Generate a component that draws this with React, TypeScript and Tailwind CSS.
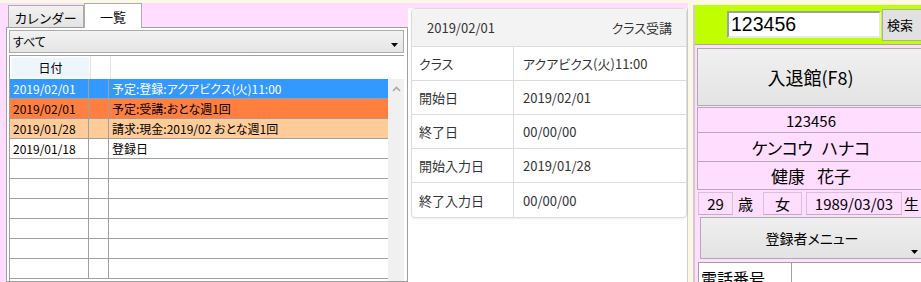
import React from "react";

const rows = [
  { d: "2019/02/01", t: "予定:登録:アクアビクス(火)11:00", bg: "bg-[#3399ff]", fg: "text-white" },
  { d: "2019/02/01", t: "予定:受講:おとな週1回", bg: "bg-[#ff7f40]", fg: "text-black" },
  { d: "2019/01/28", t: "請求:現金:2019/02 おとな週1回", bg: "bg-[#ffcc99]", fg: "text-black" },
  { d: "2019/01/18", t: "登録日", bg: "bg-white", fg: "text-black" },
  { d: "", t: "", bg: "bg-white", fg: "text-black" },
  { d: "", t: "", bg: "bg-white", fg: "text-black" },
  { d: "", t: "", bg: "bg-white", fg: "text-black" },
  { d: "", t: "", bg: "bg-white", fg: "text-black" },
  { d: "", t: "", bg: "bg-white", fg: "text-black" },
  { d: "", t: "", bg: "bg-white", fg: "text-black" },
];

const cardRows = [
  ["クラス", "アクアビクス(火)11:00"],
  ["開始日", "2019/02/01"],
  ["終了日", "00/00/00"],
  ["開始入力日", "2019/01/28"],
  ["終了入力日", "00/00/00"],
];

export default function App() {
  return (
    <div className="w-[921px] h-[282px] overflow-hidden flex bg-[#fbf8e6] font-['Noto_Sans_CJK_JP',sans-serif] [font-feature-settings:'palt'] text-black leading-none">
      {/* Left column */}
      <div className="w-[408px] h-full pt-[3px] shrink-0">
        <div className="h-full bg-[#ffddff] flex flex-col">
          {/* tabs */}
          <div className="h-[24px] flex items-end pl-[8px] shrink-0">
            <div className="w-[76px] h-[22px] border border-b-0 border-[#acacac] bg-gradient-to-b from-[#f2f2f2] to-[#e3e3e3] flex items-center justify-center text-[13px] tracking-[0.5px] pt-[1px]">
              カレンダー
            </div>
            <div className="w-[58px] h-[25px] -mb-[1px] border border-b-0 border-[#acacac] bg-white flex items-center justify-center text-[13px] relative z-10">
              一覧
            </div>
          </div>
          {/* panel */}
          <div className="flex-1 ml-[6px] border border-[#a0a0a0] bg-white pl-[2px] pr-[3px] pt-[2px] flex flex-col">
            {/* dropdown */}
            <div className="h-[23px] border border-[#acacac] bg-gradient-to-b from-[#f2f2f2] to-[#e5e5e5] flex justify-between pl-[3px] pr-[5px] shrink-0">
              <span className="text-[12px] pt-[5px]">すべて</span>
              <svg width="7" height="4" viewBox="0 0 7 4" className="self-end mb-[5px]">
                <path d="M0 0 H7 L3.5 4 Z" fill="#000" />
              </svg>
            </div>
            {/* grid */}
            <div className="mt-[2px] flex-1 border-l border-t border-[#a0a0a0] flex flex-col">
              {/* header */}
              <div className="h-[23px] flex bg-white shrink-0">
                <div className="w-[79px] m-[1px] mr-0 bg-[#eef5fd] border border-[#f8fbff] flex items-center justify-center text-[12px]">
                  日付
                </div>
                <div className="w-[20px] border-l border-[#e4e4e4]" />
                <div className="flex-1 border-l border-[#e4e4e4]" />
              </div>
              <div className="flex flex-1">
                <div className="w-[378px] flex flex-col">
                  {rows.map((r, i) => (
                    <div key={i} className={`h-[20px] flex border-b border-[#a0a0a0] shrink-0 ${r.bg} ${r.fg}`}>
                      <div className="w-[79px] border-r border-[#a0a0a0] flex items-center pl-[3px] text-[12px]">{r.d}</div>
                      <div className="w-[20px] border-r border-[#a0a0a0]" />
                      <div className="flex-1 flex items-center pl-[3px] text-[12px]">{r.t}</div>
                    </div>
                  ))}
                </div>
                <div className="flex-1 bg-[#f0f0f0] flex justify-center pt-[7px]">
                  <svg width="9" height="6" viewBox="0 0 9 6">
                    <path d="M1 5 L4.5 1.5 L8 5" stroke="#a8a8a8" strokeWidth="1.6" fill="none" />
                  </svg>
                </div>
              </div>
            </div>
          </div>
        </div>
      </div>

      {/* Middle column */}
      <div className="w-[280px] h-full shrink-0 flex flex-col">
        <div className="h-[3px]" />
        <div className="h-[5px] bg-[#ffddff]" />
        <div className="flex-1 bg-white border-r border-[#cfcfcf] pl-[3px]">
          <div className="w-[276px] border border-[#dcdcdc] rounded-[4px] shadow-[0_1px_2px_rgba(0,0,0,0.08)] overflow-hidden text-[#333] text-[13px]">
            <div className="h-[38px] bg-[#f3f3f3] flex items-center justify-between pl-[15px] pr-[14px] border-b border-[#dcdcdc]">
              <span>2019/02/01</span>
              <span>クラス受講</span>
            </div>
            {cardRows.map(([k, v], i) => (
              <div key={i} className={`h-[34px] flex ${i < cardRows.length - 1 ? "border-b border-[#dcdcdc]" : ""}`}>
                <div className="w-[102px] border-r border-[#dcdcdc] flex items-center pl-[7px]">{k}</div>
                <div className="flex-1 flex items-center pl-[9px]">{v}</div>
              </div>
            ))}
          </div>
        </div>
      </div>

      {/* cream gap */}
      <div className="w-[5px] h-full shrink-0" />

      {/* Right column */}
      <div className="flex-1 h-full pt-[5px] flex flex-col">
        <div className="flex-1 border-l-2 border-[#d6c6d6] flex flex-col bg-[#ffddff]">
          {/* green search */}
          <div className="h-[40px] bg-[#bfff00] border-b border-[#a8a8a8] flex items-center pl-[32px] shrink-0">
            <div className="w-[154px] h-[27px] bg-white border-2 border-t-[#a0a0a0] border-l-[#a0a0a0] border-r-[#e8e8e8] border-b-[#e8e8e8] flex items-center pl-[2px] font-['Liberation_Sans',sans-serif] text-[19.5px]">
              123456
            </div>
            <div className="ml-[1px] w-[42px] h-[32px] bg-[#e1e1e1] border border-[#adadad] flex items-center pl-[4px] text-[13px] shrink-0">
              検索
            </div>
          </div>
          {/* entry button */}
          <div className="mt-[3px] ml-[2px] h-[58px] border border-[#adadad] bg-gradient-to-b from-[#f0f0f0] to-[#e4e4e4] flex items-center justify-center text-[18px] shrink-0">
            入退館(F8)
          </div>
          {/* info rows */}
          <div className="ml-[2px] mt-[1px] border-l border-t border-[#b8a8b8] flex flex-col shrink-0">
            <div className="h-[25px] border-b border-[#b8a8b8] flex items-center justify-center text-[15px]">123456</div>
            <div className="h-[29px] border-b border-[#b8a8b8] flex items-center justify-center gap-[9px] text-[17px]">
              <span>ケンコウ</span>
              <span>ハナコ</span>
            </div>
            <div className="h-[28px] border-b border-[#b8a8b8] flex items-center justify-center gap-[12px] text-[17px]">
              <span>健康</span>
              <span>花子</span>
            </div>
          </div>
          {/* age row */}
          <div className="h-[27px] ml-[3px] flex items-center text-[15px] shrink-0">
            <div className="w-[35px] h-[23px] border border-[#d8c0d8] border-b-[#c4a8c4] flex items-center justify-center">29</div>
            <span className="ml-[5px] w-[25px]">歳</span>
            <div className="w-[39px] h-[23px] border border-[#d8c0d8] border-b-[#c4a8c4] flex items-center justify-center">女</div>
            <div className="ml-[4px] w-[96px] h-[23px] border border-[#d8c0d8] border-b-[#c4a8c4] flex items-center justify-center">1989/03/03</div>
            <span className="ml-[2px]">生</span>
          </div>
          {/* member menu */}
          <div className="ml-[5px] h-[42px] border border-[#adadad] bg-gradient-to-b from-[#efefef] to-[#e3e3e3] flex items-center justify-center relative text-[14px] shrink-0">
            登録者メニュー
            <svg width="7" height="4" viewBox="0 0 7 4" className="absolute right-[5px] bottom-[4px]">
              <path d="M0 0 H7 L3.5 4 Z" fill="#000" />
            </svg>
          </div>
          {/* table */}
          <div className="mt-[3px] ml-[3px] flex-1 bg-white border-l border-t border-[#a0a0a0] flex">
            <div className="w-[93px] border-r border-[#a0a0a0] pl-[2px] pt-[7px] text-[16px]">電話番号</div>
            <div className="flex-1" />
          </div>
        </div>
      </div>
    </div>
  );
}
